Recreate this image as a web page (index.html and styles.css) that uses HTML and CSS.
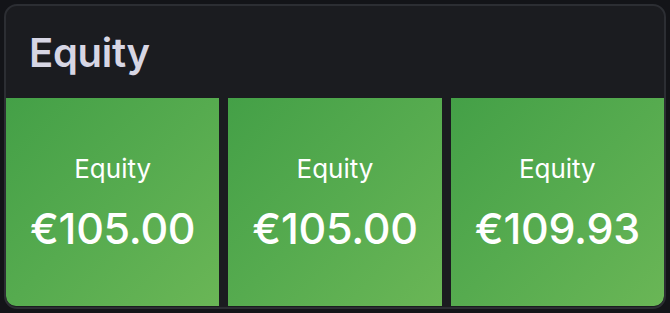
FILE: index.html
```html
<!DOCTYPE html>
<html>
<head>
<meta charset="utf-8">
<link rel="stylesheet" href="styles.css">
</head>
<body>
<div class="card">
  <div class="header"><h1 class="title">Equity</h1></div>
  <div class="tiles">
    <div class="tile tile-first"><div class="label">Equity</div><div class="value">€105.00</div></div>
    <div class="tile"><div class="label">Equity</div><div class="value">€105.00</div></div>
    <div class="tile tile-last"><div class="label">Equity</div><div class="value">€109.93</div></div>
  </div>
</div>
</body>
</html>
```
FILE: styles.css
```css
html, body { margin: 0; padding: 0; }
body {
  width: 670px; height: 313px;
  background: #131418;
  font-family: Inter, "Noto Sans", sans-serif;
  padding: 4px;
  box-sizing: border-box;
}
.card {
  width: 662px; height: 305px;
  box-sizing: border-box;
  border: 2px solid #2c2e33;
  border-radius: 13px;
  background: #1b1c20;
  display: flex; flex-direction: column;
  overflow: hidden;
}
.header {
  height: 92px;
  display: flex; align-items: center;
  padding-left: 23px;
  flex: none;
}
.title {
  margin: 0;
  font-size: 40px;
  font-weight: 600;
  color: #d7d6e4;
  letter-spacing: -0.3px;
}
.tiles {
  flex: 1;
  display: flex; gap: 9px;
  padding-bottom: 1px;
}
.tile {
  flex: 1 1 0;
  min-width: 0;
  background: linear-gradient(135deg, #44a047 0%, #56ab4f 50%, #6ab656 100%);
  display: flex; flex-direction: column; align-items: center; justify-content: center;
  color: #ffffff;
  padding-top: 2px;
}
.tile-first { border-bottom-left-radius: 10px; }
.tile-last { border-bottom-right-radius: 10px; }
.label {
  font-size: 26px;
  font-weight: 400;
  margin-bottom: 18px;
}
.value {
  font-size: 43px;
  font-weight: 500;
  letter-spacing: -0.3px;
}
```
